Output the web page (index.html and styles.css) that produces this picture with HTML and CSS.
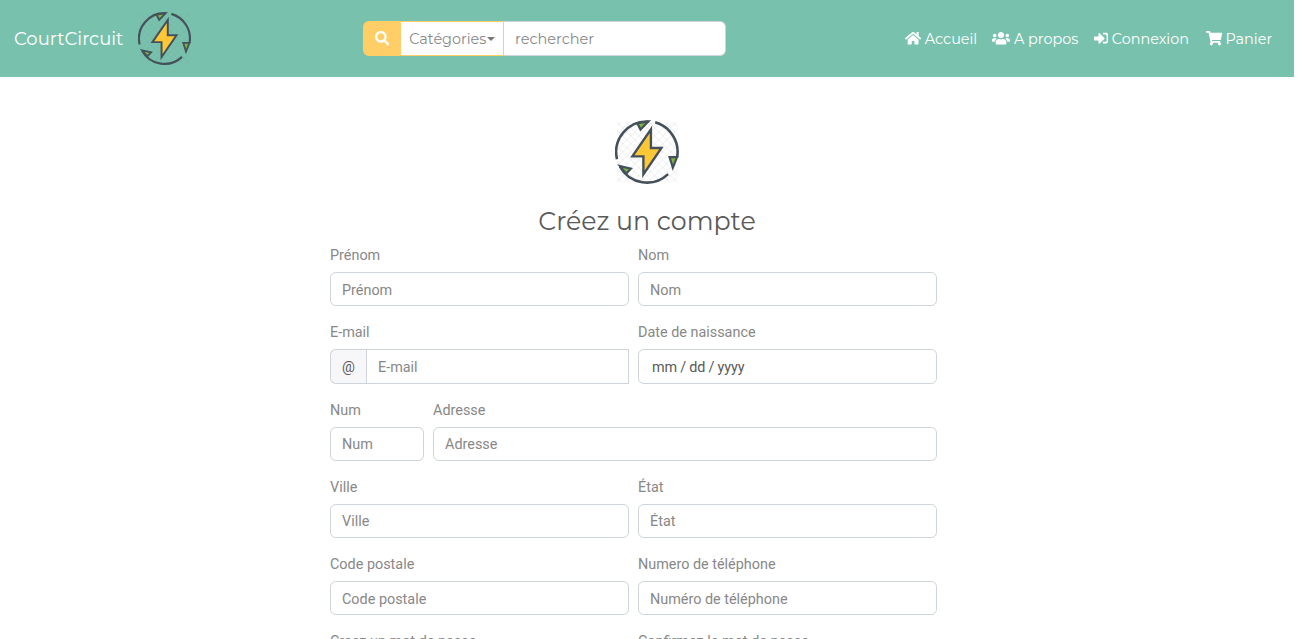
FILE: index.html
```html
<!DOCTYPE html>
<html lang="fr">
<head>
<meta charset="utf-8">
<title>CourtCircuit</title>
<link rel="stylesheet" href="styles.css">
</head>
<body>
<svg class="defs" aria-hidden="true">
  <defs>
    <pattern id="hatch" width="8" height="8" patternUnits="userSpaceOnUse"><path d="M0 0L8 8M8 0L0 8" class="hatch-line"/></pattern>
    <symbol id="logo" viewBox="0 0 65 65">
      <rect x="2" y="2" width="61" height="61" fill="url(#hatch)"/>
      <g fill="none" stroke="#45515a" stroke-width="2.6">
        <path d="M2 39.5A31 31 0 0 1 34 1.5"/>
        <path d="M40.5 2.3A31 31 0 0 1 62.500 38"/>
        <path d="M53.5 54.5A31 31 0 0 1 5 47"/>
      </g>
      <g fill="#7cb53f" stroke="#45515a" stroke-width="2.2">
        <path d="M22.5 3.2L33.5 1.6L25.7 9.6Z"/>
        <path d="M55 37.5H62.500L58.3 48Z"/>
        <path d="M5 46.5L16 49L11.3 54Z"/>
      </g>
      <path d="M36.2 9.5V28.2H46.8L28.6 54.8V36.6H17.5Z" fill="#fdc736" stroke="#45515a" stroke-width="2.4"/>
    </symbol>
  </defs>
</svg>
<div class="page">
  <nav class="navbar">
    <a class="brand"><span>CourtCircuit</span><svg class="brand-logo"><use href="#logo"/></svg></a>
    <form class="search">
      <button type="button" class="search-btn"><svg class="icon" viewBox="0 0 512 512"><path d="M505 442.7L405.3 343c-4.500-4.500-10.600-7-17-7H372c27.600-35.300 44-79.700 44-128C416 93.100 322.900 0 208 0S0 93.100 0 208s93.100 208 208 208c48.300 0 92.700-16.400 128-44v16.300c0 6.400 2.500 12.500 7 17l99.700 99.700c9.400 9.400 24.600 9.400 33.900 0l28.300-28.300c9.400-9.400 9.400-24.600.1-34zM208 336c-70.700 0-128-57.200-128-128 0-70.700 57.200-128 128-128 70.700 0 128 57.200 128 128 0 70.700-57.200 128-128 128z"/></svg></button>
      <button type="button" class="category"><span>Catégories</span><i class="caret"></i></button>
      <input class="search-input" type="text" placeholder="rechercher">
    </form>
    <div class="links">
      <a class="link home"><svg class="icon" viewBox="0 0 576 512"><path d="M280.400 148.300L96 300.100V464a16 16 0 0 0 16 16l112-.3a16 16 0 0 0 16-16V368a16 16 0 0 1 16-16h64a16 16 0 0 1 16 16v95.600a16 16 0 0 0 16 16.100L464 480a16 16 0 0 0 16-16V300L295.700 148.300a12.200 12.200 0 0 0-15.300 0zM571.600 251.500L488 182.600V44a12 12 0 0 0-12-12h-56a12 12 0 0 0-12 12v72.600L318.500 43a48 48 0 0 0-61 0L4.300 251.500a12 12 0 0 0-1.600 16.900l25.500 31a12 12 0 0 0 16.900 1.600L280.400 107.200a12.200 12.200 0 0 1 15.300 0L531 301a12 12 0 0 0 16.900-1.600l25.500-31a12 12 0 0 0-1.800-16.900z"/></svg><span>Accueil</span></a>
      <a class="link about"><svg class="icon" viewBox="0 0 640 512"><path d="M96 224c35.300 0 64-28.700 64-64s-28.700-64-64-64-64 28.700-64 64 28.700 64 64 64zm448 0c35.300 0 64-28.700 64-64s-28.700-64-64-64-64 28.700-64 64 28.700 64 64 64zm32 32h-64c-17.600 0-33.500 7.100-45.100 18.600 40.300 22.100 68.900 62 75.100 109.400h66c17.700 0 32-14.300 32-32v-32c0-35.300-28.700-64-64-64zm-256 0c61.900 0 112-50.100 112-112S381.900 32 320 32 208 82.100 208 144s50.100 112 112 112zm76.800 32h-8.300c-20.800 10-43.900 16-68.500 16s-47.600-6-68.500-16h-8.300C179.600 288 128 339.600 128 403.200V432c0 26.500 21.500 48 48 48h288c26.500 0 48-21.500 48-48v-28.800c0-63.600-51.600-115.200-115.200-115.200zm-223.700-13.400C161.500 263.100 145.600 256 128 256H64c-35.300 0-64 28.700-64 64v32c0 17.700 14.300 32 32 32h65.900c6.300-47.400 34.900-87.300 75.200-109.400z"/></svg><span>A propos</span></a>
      <a class="link login"><svg class="icon" viewBox="0 0 512 512"><path d="M416 448h-84c-6.600 0-12-5.400-12-12v-40c0-6.600 5.400-12 12-12h84c17.700 0 32-14.300 32-32V160c0-17.700-14.300-32-32-32h-84c-6.600 0-12-5.400-12-12V76c0-6.600 5.400-12 12-12h84c53 0 96 43 96 96v192c0 53-43 96-96 96zm-47-201L201 79c-15-15-41-4.500-41 17v96H24c-13.300 0-24 10.700-24 24v96c0 13.300 10.700 24 24 24h136v96c0 21.500 26 32 41 17l168-168c9.300-9.400 9.300-24.600 0-34z"/></svg><span>Connexion</span></a>
      <a class="link cart"><svg class="icon" viewBox="0 0 576 512"><path d="M528.100 301.300l47.300-208C578.800 78.300 567.400 64 552 64H159.200l-9.200-44.800C147.800 8 137.900 0 126.500 0H24C10.700 0 0 10.700 0 24v16c0 13.300 10.700 24 24 24h69.900l70.200 343.400C147.300 417.100 136 435.200 136 456c0 30.900 25.100 56 56 56s56-25.100 56-56c0-15.700-6.400-29.800-16.800-40h209.600C430.400 426.200 424 440.300 424 456c0 30.900 25.100 56 56 56s56-25.100 56-56c0-22.200-12.900-41.300-31.600-50.400l5.500-24.300c3.400-15-8-29.300-23.400-29.300H218.100l-6.500-32h293.100c11.200 0 20.900-7.800 23.400-18.700z"/></svg><span>Panier</span></a>
    </div>
  </nav>
  <main class="content">
    <svg class="main-logo"><use href="#logo"/></svg>
    <h1 class="title">Créez un compte</h1>
    <form class="form">
      <div class="row">
        <label class="field"><span>Prénom</span><input class="control" placeholder="Prénom"></label>
        <label class="field"><span>Nom</span><input class="control" placeholder="Nom"></label>
      </div>
      <div class="row">
        <label class="field"><span>E-mail</span><div class="group"><b class="addon">@</b><input class="control joined" placeholder="E-mail"></div></label>
        <label class="field"><span>Date de naissance</span><input class="control date" type="date" lang="en-US"></label>
      </div>
      <div class="row address">
        <label class="field"><span>Num</span><input class="control" placeholder="Num"></label>
        <label class="field"><span>Adresse</span><input class="control" placeholder="Adresse"></label>
      </div>
      <div class="row">
        <label class="field"><span>Ville</span><input class="control" placeholder="Ville"></label>
        <label class="field"><span>État</span><input class="control" placeholder="État"></label>
      </div>
      <div class="row">
        <label class="field"><span>Code postale</span><input class="control" placeholder="Code postale"></label>
        <label class="field"><span>Numero de téléphone</span><input class="control" placeholder="Numéro de téléphone"></label>
      </div>
      <div class="row">
        <label class="field"><span>Creez un mot de passe</span><input class="control" type="password"></label>
        <label class="field"><span>Confirmez le mot de passe</span><input class="control" type="password"></label>
      </div>
    </form>
  </main>
</div>
</body>
</html>
```
FILE: styles.css
```css
* { box-sizing: border-box; }
html { font-size: 14.4px; }
body { margin: 0; height: 639px; overflow: hidden; background: #fff; color: #888; font: 14.4px/1.5 Roboto, sans-serif; }
.defs { position: absolute; width: 0; height: 0; }
.hatch-line { stroke: #77718a; stroke-width: .7; opacity: .18; fill: none; }
.page { width: 1294px; }
.navbar { display: flex; align-items: center; height: 77px; padding: 0 21px 0 14px; background: #78c2ad; color: #fff; font-family: Montserrat, sans-serif; }
.brand { display: flex; align-items: center; width: 349px; font-size: 18px; }
.brand span { width: 124px; padding-top: 1px; white-space: nowrap; }
.brand-logo { width: 53.5px; height: 53.5px; }
.search { display: flex; width: 363px; height: 35px; }
.search-btn { width: 38px; padding: 0; border: 0; border-radius: 6px 0 0 6px; background: #ffce67; color: #fff; display: flex; align-items: center; justify-content: center; }
.icon { fill: currentColor; height: 14.4px; flex: none; }
.category { width: 103px; display: flex; align-items: center; border: 1px solid #ffce67; border-left: 0; background: #fff; color: #888; font: 14.4px Montserrat, sans-serif; white-space: nowrap; padding: 0 7px 0 7.5px; }
.category span { width: 78.5px; }
.caret { flex: none; border: 4.3px solid transparent; border-top-color: #777; border-bottom: 0; }
.search-input { flex: 1; min-width: 0; border: 1px solid #ced4da; border-left: 0; border-radius: 0 6px 6px 0; padding: 0 11px; font: 14.5px Montserrat, sans-serif; }
.search-input::placeholder, .control::placeholder { color: #888; opacity: 1; }
.links { display: flex; margin-left: auto; gap: 14.4px; font-size: 14.4px; }
.link { display: flex; align-items: center; gap: 3.6px; white-space: nowrap; }
.link span { padding-top: 2px; }
.home { width: 73px; }
.about { width: 87px; }
.login { width: 97.5px; }
.cart { width: 67.3px; }
.content { display: flex; flex-direction: column; align-items: center; padding-top: 43px; }
.main-logo { width: 64.5px; height: 64.5px; }
.title { margin: 21.5px 0 7.5px; color: #5a5a5a; font: 400 25.3px/30px Montserrat, sans-serif; white-space: nowrap; }
.form { width: 607px; margin-right: 27px; }
.row { display: grid; grid-template-columns: 299px 299px; gap: 9px; margin-bottom: 14.2px; }
.address { grid-template-columns: 94px 504px; }
.field { display: block; min-width: 0; }
.field > span { display: block; padding-top: 1.8px; margin-bottom: 5.4px; line-height: 21.6px; }
.control { display: block; width: 100%; height: 34.2px; border: 1px solid #ced4da; border-radius: 5.76px; background: #fff; padding: 2px 11px 0; color: #5a5a5a; font: 14.4px Roboto, sans-serif; }
.group { display: flex; }
.addon { width: 36px; flex: none; display: flex; align-items: center; justify-content: center; padding-top: 2px; border: 1px solid #ced4da; border-right: 0; border-radius: 5.76px 0 0 5.76px; background: #f7f7f9; color: #5a5a5a; font-weight: 400; }
.joined { flex: 1; min-width: 0; border-radius: 0; }
.date { padding-left: 12px; }
.date::-webkit-datetime-edit-text { padding: 0 2px; }
.date::-webkit-calendar-picker-indicator { display: none; }
```
